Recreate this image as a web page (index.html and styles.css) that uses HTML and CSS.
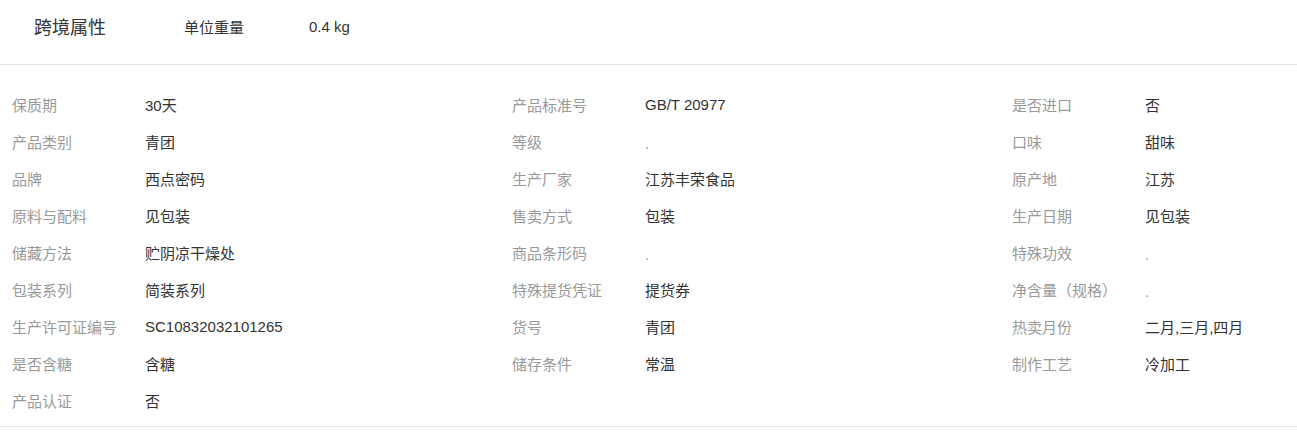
FILE: index.html
```html
<!DOCTYPE html>
<html>
  <head>
    <title>商品属性</title>
    <link rel="stylesheet" href="styles.css">
  </head>
  <body>
    <div class="cross">
      <h3 class="cross-title">跨境属性</h3>
      <span class="cross-label">单位重量</span>
      <span class="cross-value">0.4 kg</span>
    </div>
    <div class="attrs">
      <div class="attr"><span class="name">保质期</span><span class="val">30天</span></div>
      <div class="attr"><span class="name">产品标准号</span><span class="val">GB/T 20977</span></div>
      <div class="attr"><span class="name">是否进口</span><span class="val">否</span></div>
      <div class="attr"><span class="name">产品类别</span><span class="val">青团</span></div>
      <div class="attr"><span class="name">等级</span><span class="val dot">.</span></div>
      <div class="attr"><span class="name">口味</span><span class="val">甜味</span></div>
      <div class="attr"><span class="name">品牌</span><span class="val">西点密码</span></div>
      <div class="attr"><span class="name">生产厂家</span><span class="val">江苏丰荣食品</span></div>
      <div class="attr"><span class="name">原产地</span><span class="val">江苏</span></div>
      <div class="attr"><span class="name">原料与配料</span><span class="val">见包装</span></div>
      <div class="attr"><span class="name">售卖方式</span><span class="val">包装</span></div>
      <div class="attr"><span class="name">生产日期</span><span class="val">见包装</span></div>
      <div class="attr"><span class="name">储藏方法</span><span class="val">贮阴凉干燥处</span></div>
      <div class="attr"><span class="name">商品条形码</span><span class="val dot">.</span></div>
      <div class="attr"><span class="name">特殊功效</span><span class="val dot">.</span></div>
      <div class="attr"><span class="name">包装系列</span><span class="val">简装系列</span></div>
      <div class="attr"><span class="name">特殊提货凭证</span><span class="val">提货券</span></div>
      <div class="attr"><span class="name">净含量（规格）</span><span class="val dot">.</span></div>
      <div class="attr"><span class="name">生产许可证编号</span><span class="val">SC10832032101265</span></div>
      <div class="attr"><span class="name">货号</span><span class="val">青团</span></div>
      <div class="attr"><span class="name">热卖月份</span><span class="val">二月,三月,四月</span></div>
      <div class="attr"><span class="name">是否含糖</span><span class="val">含糖</span></div>
      <div class="attr"><span class="name">储存条件</span><span class="val">常温</span></div>
      <div class="attr"><span class="name">制作工艺</span><span class="val">冷加工</span></div>
      <div class="attr"><span class="name">产品认证</span><span class="val">否</span></div>
    </div>
  </body>
</html>
```

FILE: styles.css
```css
body {
  margin: 0;
  padding: 0;
  background: #ffffff;
  font-family: "Liberation Sans", "Noto Sans CJK SC", sans-serif;
  font-size: 15px;
  color: #333333;
}
.cross {
  display: flex;
  align-items: center;
  height: 65px;
  padding-bottom: 12px;
  box-sizing: border-box;
  border-bottom: 1px solid #e6e6e6;
}
.cross-title {
  margin: 0 0 0 34px;
  width: 150px;
  font-size: 18px;
  font-weight: normal;
  color: #333333;
}
.cross-label {
  width: 125px;
}
.attrs {
  display: grid;
  grid-template-columns: 500px 500px 1fr;
  padding: 21px 0 7px 12px;
  border-bottom: 1px solid #e6e6e6;
}
.attr {
  display: flex;
  align-items: center;
  height: 37px;
}
.name {
  width: 133px;
  color: #999999;
}
.val {
  color: #333333;
}
.val.dot {
  color: #999999;
  position: relative;
  top: 2px;
}
```
